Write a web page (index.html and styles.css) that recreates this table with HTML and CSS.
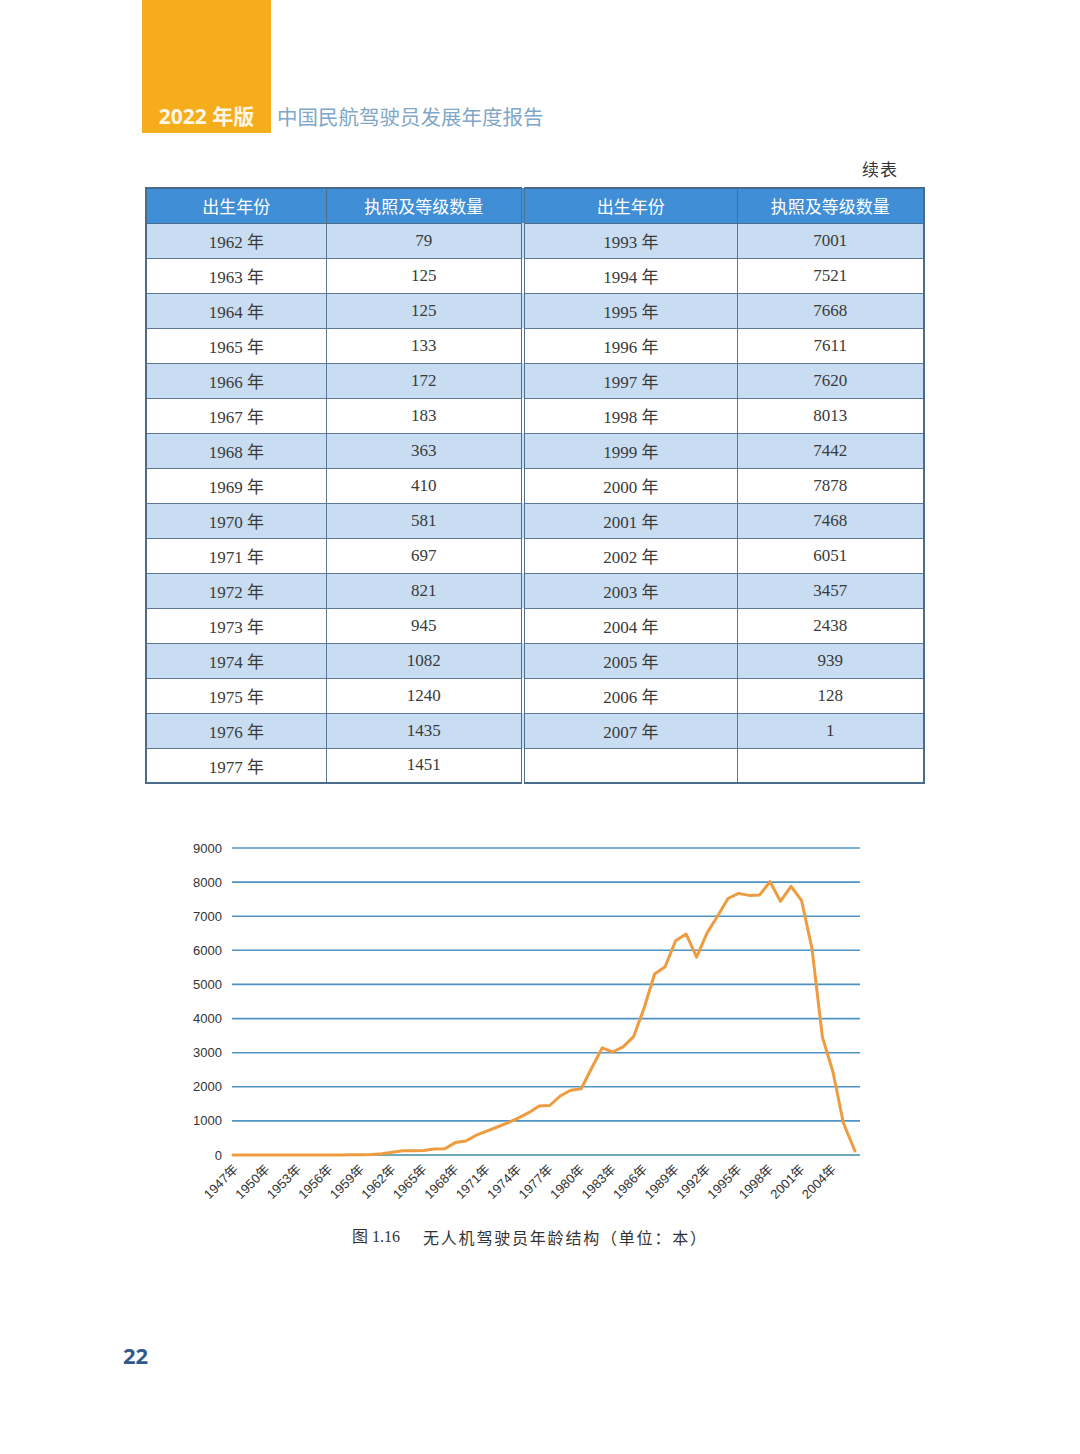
FILE: index.html
```html
<!DOCTYPE html>
<html lang="zh">
<head>
<meta charset="utf-8">
<title>中国民航驾驶员发展年度报告</title>
<link rel="stylesheet" href="styles.css">
</head>
<body>
<div class="page">
  <header class="top">
    <div class="badge">2022 年版</div>
    <div class="title">中国民航驾驶员发展年度报告</div>
  </header>
  <div class="cont">续表</div>
  <table class="data">
    <colgroup>
      <col class="c1"><col class="c2"><col class="c3"><col class="c4">
    </colgroup>
    <thead>
      <tr><th>出生年份</th><th>执照及等级数量</th><th class="split">出生年份</th><th>执照及等级数量</th></tr>
    </thead>
    <tbody>
      <tr class="alt"><td>1962 年</td><td>79</td><td class="split">1993 年</td><td>7001</td></tr>
      <tr><td>1963 年</td><td>125</td><td class="split">1994 年</td><td>7521</td></tr>
      <tr class="alt"><td>1964 年</td><td>125</td><td class="split">1995 年</td><td>7668</td></tr>
      <tr><td>1965 年</td><td>133</td><td class="split">1996 年</td><td>7611</td></tr>
      <tr class="alt"><td>1966 年</td><td>172</td><td class="split">1997 年</td><td>7620</td></tr>
      <tr><td>1967 年</td><td>183</td><td class="split">1998 年</td><td>8013</td></tr>
      <tr class="alt"><td>1968 年</td><td>363</td><td class="split">1999 年</td><td>7442</td></tr>
      <tr><td>1969 年</td><td>410</td><td class="split">2000 年</td><td>7878</td></tr>
      <tr class="alt"><td>1970 年</td><td>581</td><td class="split">2001 年</td><td>7468</td></tr>
      <tr><td>1971 年</td><td>697</td><td class="split">2002 年</td><td>6051</td></tr>
      <tr class="alt"><td>1972 年</td><td>821</td><td class="split">2003 年</td><td>3457</td></tr>
      <tr><td>1973 年</td><td>945</td><td class="split">2004 年</td><td>2438</td></tr>
      <tr class="alt"><td>1974 年</td><td>1082</td><td class="split">2005 年</td><td>939</td></tr>
      <tr><td>1975 年</td><td>1240</td><td class="split">2006 年</td><td>128</td></tr>
      <tr class="alt"><td>1976 年</td><td>1435</td><td class="split">2007 年</td><td>1</td></tr>
      <tr><td>1977 年</td><td>1451</td><td class="split"></td><td></td></tr>
    </tbody>
  </table>

  <svg class="chart" width="700" height="380" viewBox="180 830 700 380" xmlns="http://www.w3.org/2000/svg">
    <g class="grid">
      <line x1="232" y1="848" x2="860" y2="848"/>
      <line x1="232" y1="882.1" x2="860" y2="882.1"/>
      <line x1="232" y1="916.2" x2="860" y2="916.2"/>
      <line x1="232" y1="950.3" x2="860" y2="950.3"/>
      <line x1="232" y1="984.4" x2="860" y2="984.4"/>
      <line x1="232" y1="1018.6" x2="860" y2="1018.6"/>
      <line x1="232" y1="1052.7" x2="860" y2="1052.7"/>
      <line x1="232" y1="1086.8" x2="860" y2="1086.8"/>
      <line x1="232" y1="1120.9" x2="860" y2="1120.9"/>
      <line class="zero" x1="232" y1="1155" x2="860" y2="1155"/>
    </g>
    <g class="ylab">
      <text x="222" y="852.5">9000</text>
      <text x="222" y="886.6">8000</text>
      <text x="222" y="920.7">7000</text>
      <text x="222" y="954.8">6000</text>
      <text x="222" y="988.9">5000</text>
      <text x="222" y="1023.1">4000</text>
      <text x="222" y="1057.2">3000</text>
      <text x="222" y="1091.3">2000</text>
      <text x="222" y="1125.4">1000</text>
      <text x="222" y="1159.5">0</text>
    </g>
    <polyline class="series" points="233,1155 245.5,1155 256,1155 266.5,1155 277,1155 287.5,1154.9 297.9,1155 308.4,1154.9 318.9,1154.9 329.4,1154.9 339.9,1154.9 350.4,1154.8 360.9,1154.7 371.4,1154.5 381.9,1153.8 392.4,1152.3 402.8,1150.7 413.3,1150.7 423.8,1150.5 434.3,1149.1 444.8,1148.8 455.3,1142.6 465.8,1141 476.3,1135.2 486.8,1131.2 497.3,1127 507.7,1122.8 518.2,1118.1 528.7,1112.7 539.2,1106.1 549.7,1105.5 560.2,1096 570.7,1090.2 581.2,1088.7 591.7,1068 602.2,1047.9 612.6,1052 623.1,1046.9 633.6,1036.6 644.1,1008 654.6,974 665.1,966.7 675.6,940.8 686.1,934 696.6,957.2 707.1,932.9 717.5,916.2 728,898.5 738.5,893.4 749,895.4 759.5,895.1 770,881.7 780.5,901.2 791,886.3 801.5,900.3 812,948.6 822.4,1037.1 832.9,1071.8 843.4,1123 854.9,1151"/>
    <g class="xlab">
      <text transform="translate(239 1170) rotate(-45)">1947年</text>
      <text transform="translate(270.5 1170) rotate(-45)">1950年</text>
      <text transform="translate(301.9 1170) rotate(-45)">1953年</text>
      <text transform="translate(333.4 1170) rotate(-45)">1956年</text>
      <text transform="translate(364.9 1170) rotate(-45)">1959年</text>
      <text transform="translate(396.4 1170) rotate(-45)">1962年</text>
      <text transform="translate(427.8 1170) rotate(-45)">1965年</text>
      <text transform="translate(459.3 1170) rotate(-45)">1968年</text>
      <text transform="translate(490.8 1170) rotate(-45)">1971年</text>
      <text transform="translate(522.2 1170) rotate(-45)">1974年</text>
      <text transform="translate(553.7 1170) rotate(-45)">1977年</text>
      <text transform="translate(585.2 1170) rotate(-45)">1980年</text>
      <text transform="translate(616.6 1170) rotate(-45)">1983年</text>
      <text transform="translate(648.1 1170) rotate(-45)">1986年</text>
      <text transform="translate(679.6 1170) rotate(-45)">1989年</text>
      <text transform="translate(711.1 1170) rotate(-45)">1992年</text>
      <text transform="translate(742.5 1170) rotate(-45)">1995年</text>
      <text transform="translate(774 1170) rotate(-45)">1998年</text>
      <text transform="translate(805.5 1170) rotate(-45)">2001年</text>
      <text transform="translate(836.9 1170) rotate(-45)">2004年</text>
    </g>
  </svg>

  <p class="caption"><span class="fig">图 1.16</span><span class="cap-text">无人机驾驶员年龄结构（单位：本）</span></p>
  <div class="pageno">22</div>
</div>
</body>
</html>
```

FILE: styles.css
```css
html, body {
  margin: 0;
  padding: 0;
  background: #ffffff;
}

.page {
  width: 1080px;
  height: 1454px;
  overflow: hidden;
  font-family: "Liberation Serif", "Noto Sans CJK SC", serif;
  color: #353535;
}

.top {
  display: flex;
  align-items: flex-end;
  padding-left: 142px;
  height: 133px;
}

.badge {
  width: 129px;
  height: 133px;
  box-sizing: border-box;
  background: #f6ad1b;
  color: #fff7e4;
  font-family: "Open Sans", "Noto Sans CJK SC", sans-serif;
  font-weight: 700;
  font-size: 21px;
  line-height: 28px;
  display: flex;
  align-items: flex-end;
  justify-content: center;
  padding-bottom: 3px;
}

.title {
  margin-left: 6px;
  margin-bottom: 3px;
  font-family: "Noto Sans CJK SC", sans-serif;
  font-size: 20.5px;
  line-height: 28px;
  color: #80a7c8;
}

.cont {
  margin: 24px 0 6px;
  height: 24px;
  line-height: 24px;
  text-align: right;
  padding-right: 182px;
  font-family: "Noto Sans CJK SC", serif;
  font-size: 17px;
  letter-spacing: 1px;
  color: #333;
}

.data {
  margin-left: 145px;
  width: 778px;
  table-layout: fixed;
  border-collapse: collapse;
  border: 2px solid #4b6b8b;
}

.data col.c1 { width: 180px; }
.data col.c2 { width: 197px; }
.data col.c3 { width: 214px; }
.data col.c4 { width: 187px; }

.data tr {
  height: 35px;
}

.data th {
  background: #3f8ed6;
  color: #ffffff;
  font-family: "Noto Sans CJK SC", sans-serif;
  font-weight: 400;
  font-size: 17px;
  border: 1px solid #4d6d8d;
  padding: 0;
}

.data td {
  text-align: center;
  font-size: 17px;
  color: #3a3a3a;
  border: 1px solid #5b7896;
  padding: 0;
}

.data .split {
  border-left: 4px double #4f6f8f;
}

.data tr.alt td {
  background: #c9ddf2;
}

.chart {
  display: block;
  margin: 46px 0 0 180px;
}

.chart .grid line {
  stroke: #4f93c4;
  stroke-width: 1.6;
}

.chart .grid line.zero {
  stroke: #3f8ca6;
}

.chart .ylab text {
  font-family: "Liberation Sans", Arial, sans-serif;
  font-size: 13px;
  fill: #333;
  text-anchor: end;
}

.chart .xlab text {
  font-family: "Liberation Sans", "Noto Sans CJK SC", sans-serif;
  font-size: 13px;
  fill: #333;
  text-anchor: end;
}

.chart .series {
  fill: none;
  stroke: #ee9c3f;
  stroke-width: 3;
  stroke-linejoin: round;
  stroke-linecap: round;
}

.caption {
  margin: 17px 0 0;
  padding-left: 352px;
  font-size: 16px;
  line-height: 20px;
  color: #333;
  display: flex;
}

.caption .fig {
  width: 71px;
  white-space: pre;
}

.caption .cap-text {
  font-family: "Noto Sans CJK SC", serif;
  letter-spacing: 1.8px;
}

.pageno {
  margin-top: 94px;
  padding-left: 123px;
  font-family: "Open Sans", sans-serif;
  font-weight: 700;
  font-size: 22px;
  line-height: 28px;
  color: #2d5b8d;
}
```
